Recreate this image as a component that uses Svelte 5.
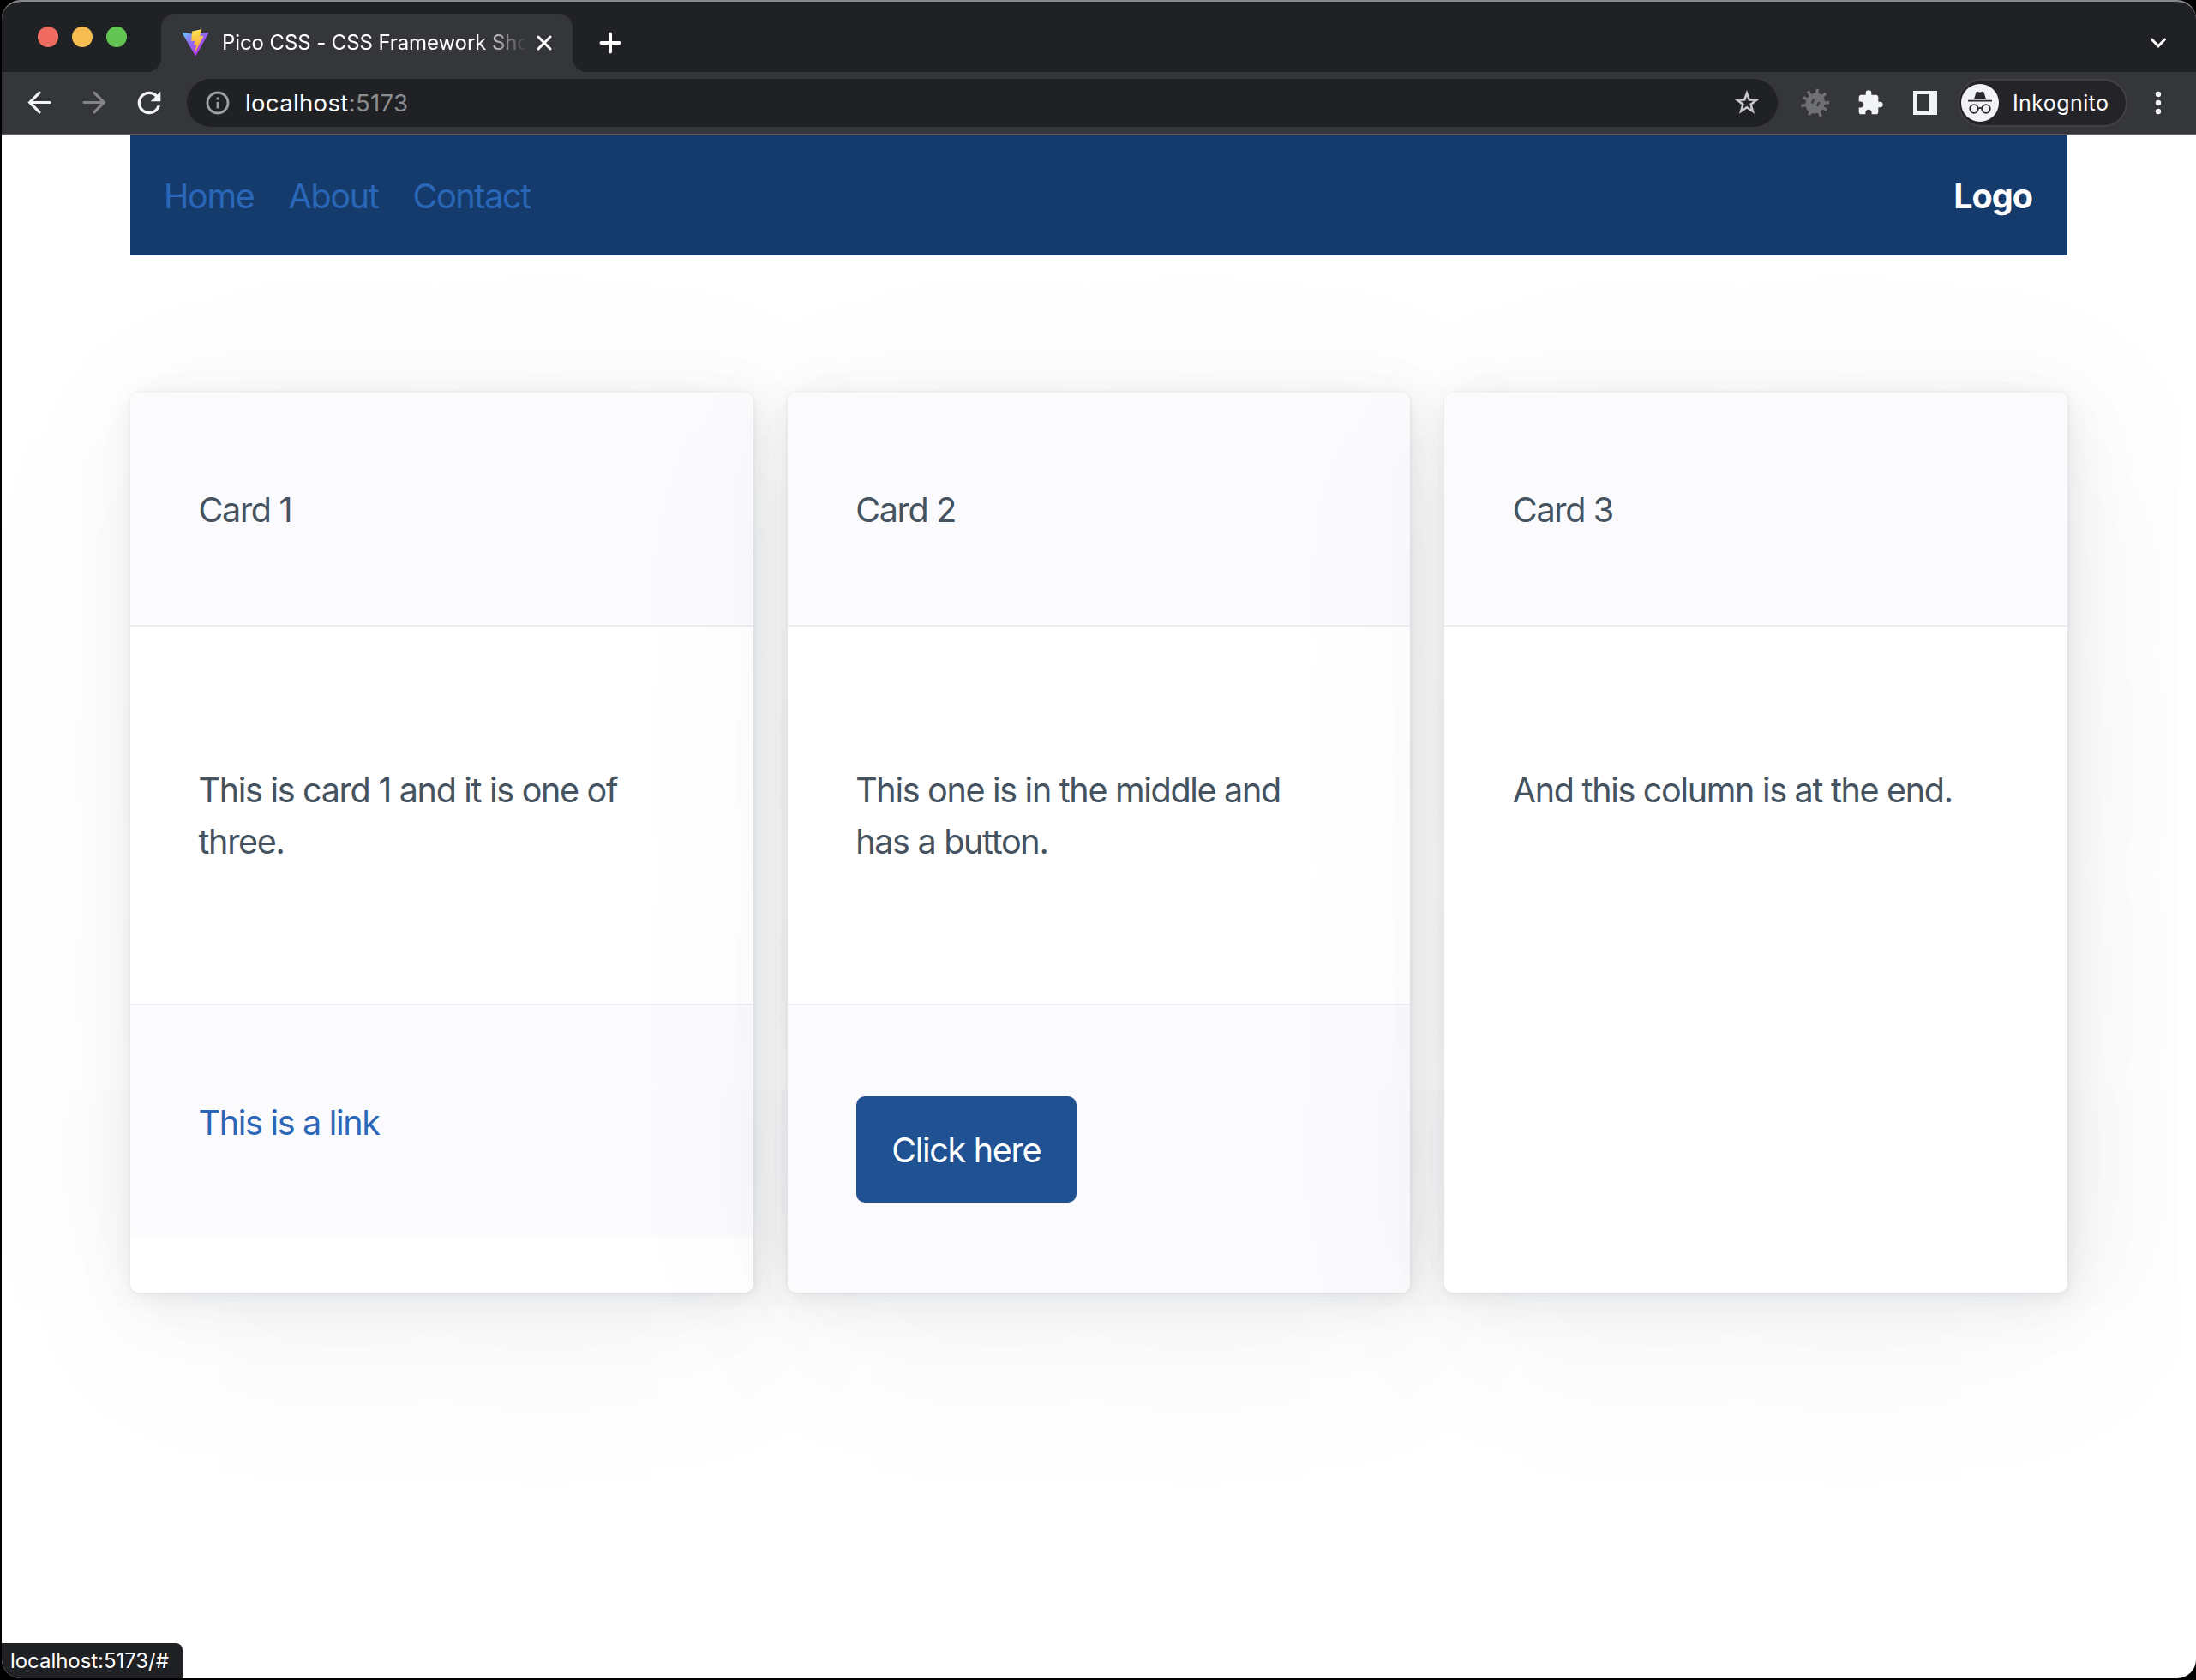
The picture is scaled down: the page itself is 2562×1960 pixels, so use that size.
<script>
  const navLinks = ['Home', 'About', 'Contact'];
  const cards = [
    { title: 'Card 1', text: 'This is card 1 and it is one of three.', link: 'This is a link' },
    { title: 'Card 2', text: 'This one is in the middle and has a button.', button: 'Click here' },
    { title: 'Card 3', text: 'And this column is at the end.' }
  ];
</script>

<div class="window">
  <div class="tabstrip">
    <div class="lights"><i class="red"></i><i class="yellow"></i><i class="green"></i></div>
    <div class="tab">
      <svg class="favicon" viewBox="0 0 410 404">
        <defs>
          <linearGradient id="tri" x1="6" y1="33" x2="235" y2="344" gradientUnits="userSpaceOnUse">
            <stop stop-color="#6cd0ff" /><stop offset=".5" stop-color="#8b72f5" /><stop offset="1" stop-color="#b03cf0" />
          </linearGradient>
          <linearGradient id="bolt" x1="194" y1="9" x2="236" y2="293" gradientUnits="userSpaceOnUse">
            <stop stop-color="#ffe45a" /><stop offset=".3" stop-color="#fccf4a" /><stop offset="1" stop-color="#f5a83c" />
          </linearGradient>
        </defs>
        <path fill="url(#tri)" d="M399.641 59.5246L215.643 388.545C211.844 395.338 202.084 395.378 198.228 388.618L10.5817 59.5563C6.38087 52.1896 12.6802 43.2665 21.0281 44.7586L205.223 77.6824C206.398 77.8924 207.601 77.8904 208.776 77.6763L389.119 44.8058C397.439 43.2894 403.768 52.1434 399.641 59.5246Z" />
        <path fill="url(#bolt)" d="M292.965 1.5744L156.801 28.2552C154.563 28.6937 152.906 30.5903 152.771 32.8664L144.395 174.33C144.198 177.662 147.258 180.248 150.51 179.498L188.42 170.749C191.967 169.931 195.172 173.055 194.443 176.622L183.18 231.775C182.422 235.487 185.907 238.661 189.532 237.56L212.947 230.446C216.577 229.344 220.065 232.527 219.297 236.242L201.398 322.875C200.278 328.294 207.486 331.249 210.492 326.603L212.5 323.5L323.454 102.072C325.312 98.3645 322.108 94.137 318.036 94.9228L279.014 102.454C275.347 103.161 272.227 99.746 273.262 96.1583L298.731 7.86689C299.767 4.27314 296.636 0.855181 292.965 1.5744Z" />
      </svg>
      <span class="tab-title">Pico CSS - CSS Framework Sho</span>
      <svg class="close" viewBox="0 0 24 24"><path d="M5 5L19 19M19 5L5 19" /></svg>
    </div>
    <svg class="plus" viewBox="0 0 28 28"><path d="M14 3.5V24.5M3.5 14H24.5" /></svg>
    <svg class="chevron" viewBox="0 0 28 28"><path d="M6.5 10L14 17.8L21.5 10" /></svg>
  </div>

  <div class="toolbar">
    <svg class="ico line" viewBox="0 0 40 40"><path d="M32 19.5H9M20 8.2L8.7 19.5L20 30.8" /></svg>
    <svg class="ico line dim" viewBox="0 0 40 40"><path d="M8 19.5H31M20 8.2L31.3 19.5L20 30.8" /></svg>
    <svg class="ico" viewBox="0 0 24 24"><path d="M17.65 6.35A7.958 7.958 0 0 0 12 4c-4.42 0-7.99 3.58-7.99 8s3.57 8 7.99 8c3.73 0 6.84-2.55 7.73-6h-2.08A5.99 5.99 0 0 1 12 18c-3.31 0-6-2.69-6-6s2.69-6 6-6c1.66 0 3.14.69 4.22 1.78L13 11h7V4l-2.35 2.35z" /></svg>
    <div class="omnibox">
      <svg class="info" viewBox="0 0 28 28">
        <circle cx="14" cy="14" r="12" />
        <path d="M14 13V20.4M14 7.6V10.4" />
      </svg>
      <span class="url">localhost<span class="port">:5173</span></span>
      <svg class="star" viewBox="0 0 32 32"><path d="M16 4.8L18.8 12.4L27 12.8L20.6 17.8L22.8 25.8L16 21.2L9.2 25.8L11.4 17.8L5 12.8L13.2 12.4Z" /></svg>
    </div>
    <svg class="ico bug" viewBox="0 0 40 40">
      <g transform="rotate(28 20 20)">
        <ellipse cx="20" cy="20.5" rx="11" ry="12.4" />
        <path d="M6 12L12 16M4.5 21H12M7 31L13 26M34 12L28 16M35.5 21H28M33 31L27 26M14.5 4.5L17 11M25.5 4.5L23 11M20 30V36" />
        <path class="eyes" d="M16.5 17V22.5M23.5 17V22.5" />
      </g>
    </svg>
    <svg class="ico puzzle" viewBox="0 0 24 24"><path d="M20.5 11H19V7c0-1.1-.9-2-2-2h-4V3.5a2.5 2.5 0 0 0-5 0V5H4c-1.1 0-1.99.9-1.99 2v3.8H3.5c1.49 0 2.7 1.21 2.7 2.7s-1.21 2.7-2.7 2.7H2V20c0 1.1.9 2 2 2h3.8v-1.5c0-1.49 1.21-2.7 2.7-2.7 1.49 0 2.7 1.21 2.7 2.7V22H17c1.1 0 2-.9 2-2v-4h1.5a2.5 2.5 0 0 0 0-5z" /></svg>
    <svg class="ico" viewBox="0 0 40 40"><path fill-rule="evenodd" d="M6 6H34V34H6ZM10 10V30H24V10Z" /></svg>
    <div class="profile">
      <svg class="incognito" viewBox="0 0 44 44">
        <circle class="disc" cx="22" cy="22" r="22" />
        <path class="hat" d="M15 17.6L17.6 9.6Q18.2 8.4 19.6 9L22 9.8L24.4 9Q25.8 8.4 26.4 9.6L29 17.6ZM8 18.8H36V20.6H8Z" />
        <g class="glasses"><circle cx="15" cy="29" r="4.8" /><circle cx="29" cy="29" r="4.8" /><path d="M19.8 28.6Q22 27 24.2 28.6" /></g>
      </svg>
      <span>Inkognito</span>
    </div>
    <svg class="ico kebab" viewBox="0 0 40 40"><circle cx="20" cy="10" r="3.2" /><circle cx="20" cy="20" r="3.2" /><circle cx="20" cy="30" r="3.2" /></svg>
  </div>

  <main class="page">
    <nav>
      <ul>
        {#each navLinks as label}<li>{label}</li>{/each}
      </ul>
      <strong>Logo</strong>
    </nav>
    <div class="grid">
      {#each cards as card}
        <article>
          <header>{card.title}</header>
          <p>{card.text}</p>
          {#if card.link}<footer><span class="link">{card.link}</span></footer>{/if}
          {#if card.button}<footer><button>{card.button}</button></footer>{/if}
        </article>
      {/each}
    </div>
    <div class="status">localhost:5173/#</div>
  </main>
</div>

<style>
  :global(body) { background: #000; }
  * { box-sizing: border-box; }
  svg { display: block; flex: none; }
  .window {
    height: 1958px;
    margin-left: 2px;
    border-top: 2px solid #87888a;
    border-radius: 22px;
    overflow: hidden;
    display: flex;
    flex-direction: column;
    background: #fff;
    font-family: Inter, 'Liberation Sans', sans-serif;
    font-weight: 425;
  }
  .tabstrip {
    height: 82px;
    flex: none;
    display: flex;
    align-items: flex-end;
    background: #202124;
    padding: 0 30px 0 42px;
  }
  .lights { display: flex; gap: 16px; height: 82px; padding-top: 29px; width: 144px; }
  .lights i { width: 24px; height: 24px; border-radius: 50%; }
  .red { background: #ee6a5f; }
  .yellow { background: #f5bd4f; }
  .green { background: #61c454; }
  .tab {
    position: relative;
    width: 480px;
    height: 68px;
    padding: 0 20px 0 24px;
    display: flex;
    align-items: center;
    border-radius: 16px 16px 0 0;
    background: #35363a;
  }
  .tab::before, .tab::after {
    content: '';
    position: absolute;
    bottom: 0;
    width: 16px;
    height: 16px;
  }
  .tab::before { right: 100%; background: radial-gradient(circle at 0 0, transparent 15.5px, #35363a 16px); }
  .tab::after { left: 100%; background: radial-gradient(circle at 100% 0, transparent 15.5px, #35363a 16px); }
  .favicon { width: 32px; height: 32px; }
  .tab-title {
    width: 354px;
    flex: none;
    margin: 0 10px 0 15px;
    white-space: nowrap;
    font-size: 24px;
    line-height: 34px;
    letter-spacing: -0.1px;
    color: #fff;
    -webkit-mask-image: linear-gradient(90deg, #000 300px, transparent 356px);
    mask-image: linear-gradient(90deg, #000 300px, transparent 356px);
  }
  .close { width: 24px; height: 24px; }
  .close path, .plus path, .chevron path { fill: none; stroke: #fff; stroke-linecap: round; stroke-width: 3; }
  .plus { width: 28px; height: 28px; margin: 0 auto 20px 30px; }
  .plus path { stroke-width: 4; }
  .chevron { width: 28px; height: 28px; margin-bottom: 20px; }
  .toolbar {
    height: 74px;
    flex: none;
    display: flex;
    align-items: center;
    padding: 0 24px;
    background: #35363a;
    border-bottom: 2px solid #5d5e61;
  }
  .ico { width: 40px; height: 40px; fill: #f1f3f4; margin-right: 24px; }
  .line path { fill: none; stroke: #f1f3f4; stroke-width: 3.2; stroke-linecap: round; }
  .line.dim path { stroke: #848587; }
  .omnibox {
    flex: 1;
    height: 56px;
    margin-right: 24px;
    padding: 0 20px 0 22px;
    display: flex;
    align-items: center;
    background: #202124;
    border-radius: 28px;
  }
  .info { width: 28px; height: 28px; fill: none; stroke: #9aa0a6; stroke-width: 2.8; }
  .url { margin: 0 auto 0 18px; font-size: 27.5px; color: #fff; letter-spacing: 0.35px; }
  .port { color: #8b8c8e; }
  .star { width: 32px; height: 32px; fill: none; stroke: #c7c8ca; stroke-width: 2.6; }
  .bug { fill: #6f7072; }
  .bug path { fill: none; stroke: #6f7072; stroke-width: 3.4; }
  .bug .eyes { stroke: #3c3d40; stroke-width: 2.6; }
  .puzzle { width: 32px; height: 32px; margin: 0 28px 0 4px; }
  .profile {
    width: 198px;
    height: 56px;
    margin: 0 16px 0 -6px;
    padding-left: 2px;
    display: flex;
    align-items: center;
    gap: 16px;
    border: 2px solid #424146;
    border-radius: 28px;
    background: #242328;
    color: #fff;
    font-size: 25px;
    letter-spacing: 0.4px;
  }
  .incognito { width: 44px; height: 44px; }
  .disc { fill: #f1f3f4; }
  .hat { fill: #2b2a2e; }
  .glasses { fill: none; stroke: #2b2a2e; stroke-width: 1.8; }
  .kebab { margin-right: 0; }

  .page {
    position: relative;
    flex: 1;
    padding: 0 150px;
    font-size: 39.5px;
    line-height: 60px;
    letter-spacing: -1.3px;
    color: #455361;
  }
  nav {
    height: 140px;
    padding: 2px 41px 0 39px;
    display: flex;
    align-items: center;
    justify-content: space-between;
    background: #153b6d;
  }
  ul { display: flex; gap: 40px; margin: 0; padding: 0; list-style: none; color: #2b67b8; }
  strong { color: #fff; font-weight: 700; letter-spacing: -1px; }
  .grid { display: grid; grid-template-columns: repeat(3, minmax(0, 1fr)); gap: 40px; padding-top: 160px; }
  article {
    height: 1050px;
    border-radius: 10px;
    background: #fff;
    box-shadow:
      0.58px 1.16px 6.96px rgba(27, 40, 50, 0.01698),
      1.34px 2.68px 16.08px rgba(27, 40, 50, 0.024),
      2.5px 5px 30px rgba(27, 40, 50, 0.03),
      4.5px 9px 54px rgba(27, 40, 50, 0.036),
      8.34px 16.68px 100.08px rgba(27, 40, 50, 0.04302),
      20px 40px 270px rgba(27, 40, 50, 0.06),
      0 0 0 2.5px rgba(27, 40, 50, 0.015);
  }
  header, footer { padding: 106.6px 79.5px 104.6px; background: #fbfbfd; }
  header { border-bottom: 2px solid #edeef3; border-radius: 10px 10px 0 0; }
  footer { border-top: 2px solid #edeef3; border-radius: 0 0 10px 10px; }
  p { margin: 161px 90px 159px 79.5px; }
  .link { display: block; color: #2b67b8; }
  button {
    display: block;
    height: 124px;
    width: 257px;
    margin: -1px 0 1px 0.5px;
    padding: 2px 0 0;
    border: 0;
    border-radius: 10px;
    background: #205293;
    color: #fff;
    font: inherit;
    letter-spacing: inherit;
  }
  .status {
    position: absolute;
    left: 0;
    bottom: 0;
    width: 211px;
    height: 41px;
    padding-left: 10px;
    border-radius: 0 8px 0 8px;
    background: #202124;
    color: #fff;
    font-size: 24px;
    line-height: 41px;
    letter-spacing: -0.05px;
  }
</style>
